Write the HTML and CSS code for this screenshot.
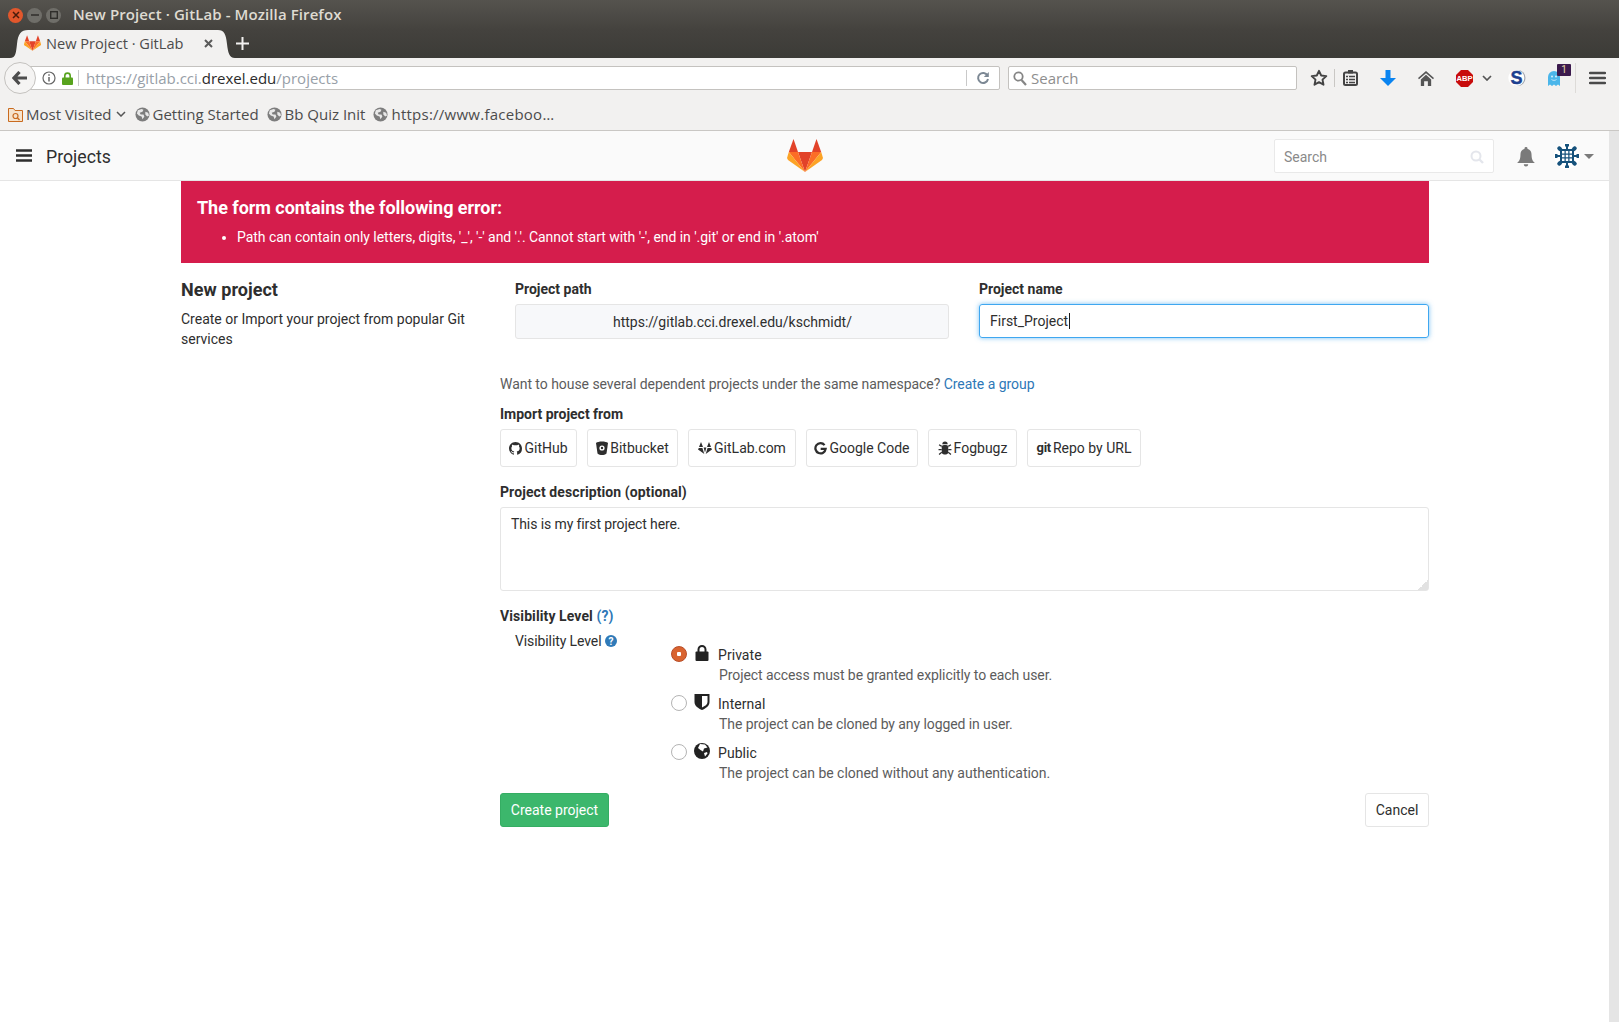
FILE: index.html
```html
<!DOCTYPE html>
<html lang="en">
    <head>
        <meta charset="UTF-8" />
        <title>New Project · GitLab</title>
        <link rel="stylesheet" href="styles.css">
    </head>
    <body>
        <svg class="sprites" width="0" height="0">
            <symbol id="fox" viewBox="0 0 36 33">
                <polygon fill="#e24329" points="11,13 25,13 18,33" />
                <polygon fill="#e24329" points="6.5,0 11,13 1.8,13" />
                <polygon fill="#e24329" points="29.5,0 34.2,13 25,13" />
                <polygon fill="#fc6d26" points="1.8,13 11,13 18,33" />
                <polygon fill="#fc6d26" points="25,13 34.2,13 18,33" />
                <polygon fill="#fca326" points="1.8,13 0,19 1,21 18,33" />
                <polygon fill="#fca326" points="34.2,13 36,19 35,21 18,33" />
            </symbol>
            <symbol id="globe" viewBox="0 0 16 16">
                <circle cx="8" cy="8" r="7.5" fill="#7d7d7d" />
                <path fill="#e8e8e8" d="M3 3.5 7 2l2 1-1 2-3 1 1 2 3 0 1 2-2 3-1-3-3-1-2-2zM11 5l3 1 1 3-2 1-2-2z" />
            </symbol>
        </svg>

        <div class="titlebar">
            <span class="wm-btn wm-close">
                <svg width="8" height="8" viewBox="0 0 8 8"><path d="M1 1l6 6M7 1L1 7" stroke="#4a1c0c" stroke-width="1.5" /></svg>
            </span>
            <span class="wm-btn wm-min">
                <svg width="8" height="8" viewBox="0 0 8 8"><path d="M0 4h8" stroke="#2f2e2b" stroke-width="1.5" /></svg>
            </span>
            <span class="wm-btn wm-max">
                <svg width="8" height="8" viewBox="0 0 8 8"><rect x="0.7" y="0.7" width="6.6" height="6.6" fill="none" stroke="#2f2e2b" stroke-width="1.4" /></svg>
            </span>
            <span class="win-title">New Project · GitLab - Mozilla Firefox</span>
        </div>

        <div class="tabstrip">
            <div class="tab">
                <svg class="tab-fav" width="17" height="16"><use href="#fox" /></svg>
                <span class="tab-label">New Project · GitLab</span>
                <svg class="tab-close" width="9" height="9" viewBox="0 0 9 9"><path d="M1 1l7 7M8 1L1 8" stroke="#5a5a5a" stroke-width="2" /></svg>
            </div>
            <svg class="new-tab" width="13" height="13" viewBox="0 0 13 13"><path d="M6.5 0v13M0 6.5h13" stroke="#f2f1f0" stroke-width="2" /></svg>
        </div>

        <div class="toolbar">
            <button class="back-btn">
                <svg width="16" height="14" viewBox="0 0 16 14"><path d="M7.5 1 2 7l5.500 6M2.500 7H15" fill="none" stroke="#4d4d4d" stroke-width="3.200" /></svg>
            </button>
            <div class="urlbar">
                <svg class="url-info" width="14" height="14" viewBox="0 0 14 14">
                    <circle cx="7" cy="7" r="6" fill="none" stroke="#666" stroke-width="1.2" />
                    <path d="M7 6v4.500M7 3.200v1.600" stroke="#666" stroke-width="1.500" />
                </svg>
                <svg class="url-lock" width="11" height="13" viewBox="0 0 11 13">
                    <path d="M2.800 6V3.800a2.700 2.700 0 0 1 5.400 0V6" fill="none" stroke="#58a31e" stroke-width="1.600" />
                    <rect y="5.500" width="11" height="7.500" rx="1" fill="#58a31e" />
                </svg>
                <span class="url-sep"></span>
                <span class="url-text">https://gitlab.cci.<b>drexel.edu</b>/projects</span>
                <span class="url-sep url-sep-end"></span>
                <svg class="url-reload" width="14" height="14" viewBox="0 0 14 14">
                    <path d="M11.500 4.500A5 5 0 1 0 12 8" fill="none" stroke="#7c8894" stroke-width="2" />
                    <path d="M12.800 1v5h-5z" fill="#7c8894" />
                </svg>
            </div>
            <div class="searchbar">
                <svg width="14" height="15" viewBox="0 0 14 15">
                    <circle cx="5.500" cy="5.500" r="4.200" fill="none" stroke="#858585" stroke-width="1.800" />
                    <path d="M8.500 9l4.500 5" stroke="#858585" stroke-width="2.200" />
                </svg>
                <span>Search</span>
            </div>

            <span class="tb-btn tb-star">
                <svg width="18" height="18" viewBox="0 0 18 18"><path d="M9 1.800l2.200 4.700 5.100.6-3.800 3.500 1 5.100L9 13.200l-4.500 2.500 1-5.100L1.700 7.100l5.100-.6z" fill="none" stroke="#444" stroke-width="1.900" stroke-linejoin="round" /></svg>
            </span>
            <span class="tb-sep tb-sep-a"></span>
            <span class="tb-btn tb-clip">
                <svg width="15" height="16" viewBox="0 0 15 16">
                    <rect x="1" y="2.500" width="13" height="12.500" rx="1.500" fill="#f2f1f0" stroke="#444" stroke-width="2" />
                    <rect x="5" y="0" width="5" height="3.500" fill="#444" />
                    <path d="M3 6.500h9M3 9.500h9M3 12.500h9" stroke="#444" stroke-width="1.500" />
                    <path d="M5.500 5.500v8.500" stroke="#f2f1f0" stroke-width="1" />
                </svg>
            </span>
            <span class="tb-btn">
                <svg width="16" height="16" viewBox="0 0 16 16"><path d="M5.500 0h5v8H16l-8 8-8-8h5.500z" fill="#0a84f0" /></svg>
            </span>
            <span class="tb-btn">
                <svg width="16" height="15" viewBox="0 0 17 16">
                    <path d="M8.500 0 17 7.500l-1 1.300-7.500-6.500L1 8.800 0 7.500z" fill="#555" />
                    <path d="M8.500 4 14 9v7h-3.500v-5h-4v5H3V9z" fill="#555" />
                </svg>
            </span>
            <span class="tb-btn">
                <svg width="17" height="17" viewBox="0 0 17 17">
                    <polygon points="5,0 12,0 17,5 17,12 12,17 5,17 0,12 0,5" fill="#c80c0c" />
                    <text class="abp-text" x="8.500" y="11.200">ABP</text>
                </svg>
            </span>
            <span class="tb-chevron">
                <svg width="10" height="6" viewBox="0 0 10 6"><path d="M1 1l4 4 4-4" fill="none" stroke="#555" stroke-width="1.700" /></svg>
            </span>
            <span class="tb-btn tb-s">
                <svg width="18" height="18" viewBox="0 0 18 18">
                    <circle cx="9.500" cy="9" r="8" fill="#a4a7b0" />
                    <circle cx="8.300" cy="9" r="8" fill="#fff" />
                    <text class="s-text" x="8.500" y="15">S</text>
                </svg>
            </span>
            <span class="tb-btn tb-ghost">
                <svg width="14" height="16" viewBox="0 0 14 16">
                    <path d="M1 7a6 6 0 0 1 12 0v9l-2-1.500L9 16l-2-1.500L5 16l-2-1.500L1 16z" fill="#4bb6ea" />
                    <circle cx="5" cy="6.500" r="1" fill="#d8f0fb" />
                    <circle cx="9" cy="6.500" r="1" fill="#d8f0fb" />
                    <path d="M4.500 9.500c1.500 1.200 3.500 1.200 5 0" fill="none" stroke="#d8f0fb" stroke-width="0.800" />
                </svg>
                <span class="tb-badge">1</span>
            </span>
            <span class="tb-sep tb-sep-b"></span>
            <span class="tb-btn tb-menu">
                <svg width="17" height="14" viewBox="0 0 17 14"><path d="M1 2h15M1 7h15M1 12h15" stroke="#4a4a4a" stroke-width="2.400" stroke-linecap="round" /></svg>
            </span>
        </div>

        <div class="bookmarks">
            <span class="bm bm-folder">
                <svg width="15" height="15" viewBox="0 0 15 15">
                    <path d="M0.500 14.500V1.500h5l1.500 2h7.500v11z" fill="#f6e3cc" stroke="#c96a1e" />
                    <circle cx="7.500" cy="9" r="2.500" fill="none" stroke="#c96a1e" stroke-width="1.200" />
                    <path d="M9.500 11l2 2" stroke="#c96a1e" stroke-width="1.400" />
                </svg>
                Most Visited
                <svg class="bm-chevron" width="10" height="6" viewBox="0 0 10 6"><path d="M1 1l4 4 4-4" fill="none" stroke="#555" stroke-width="1.500" /></svg>
            </span>
            <span class="bm"><svg width="15" height="15"><use href="#globe" /></svg>Getting Started</span>
            <span class="bm"><svg width="15" height="15"><use href="#globe" /></svg>Bb Quiz Init</span>
            <span class="bm bm-long"><svg width="15" height="15"><use href="#globe" /></svg>https://www.faceboo…</span>
        </div>

        <div class="viewport">
            <div class="page">
                <header class="nav">
                    <div class="nav-left">
                        <svg width="16" height="13" viewBox="0 0 16 13"><path d="M0 1.500h16M0 6.500h16M0 11.500h16" stroke="#2e2e2e" stroke-width="2.600" /></svg>
                        <span class="nav-title">Projects</span>
                    </div>
                    <svg class="nav-logo" width="36" height="33"><use href="#fox" /></svg>
                    <div class="nav-right">
                        <div class="nav-search">
                            <span>Search</span>
                            <svg width="14" height="14" viewBox="0 0 14 14">
                                <circle cx="6" cy="6" r="4.500" fill="none" stroke="#e4e6ec" stroke-width="2" />
                                <path d="M9.500 9.500 13 13" stroke="#e4e6ec" stroke-width="2.400" />
                            </svg>
                        </div>
                        <svg class="nav-bell" width="18" height="20" viewBox="0 0 16 18">
                            <path d="M8 0a1.300 1.300 0 0 1 1.300 1.500C12 2.200 13 4.500 13 7c0 4 1 5.500 3 7.500H0C2 12.500 3 11 3 7c0-2.500 1-4.800 3.700-5.500A1.300 1.300 0 0 1 8 0z" fill="#7a7a7a" />
                            <path d="M6 15.500h4a2 2 0 0 1-4 0z" fill="#7a7a7a" />
                        </svg>
                        <svg class="nav-avatar" width="26" height="26" viewBox="0 0 26 26">
                            <circle cx="13" cy="13" r="13" fill="#fff" />
                            <path d="M6 6h14v14H6z" fill="#16527c" />
                            <path d="M8 8h2.500v2.500H8zM11.750 8h2.500v2.500h-2.500zM15.500 8H18v2.500h-2.500zM8 11.750h2.500v2.500H8zM11.750 11.750h2.500v2.500h-2.500zM15.500 11.750H18v2.500h-2.500zM8 15.500h2.500V18H8zM11.750 15.500h2.500V18h-2.500zM15.500 15.500H18V18h-2.500z" fill="#fff" />
                            <path d="M11 1h4v2l-1 1v2h-2V4l-1-1zM11 25h4v-2l-1-1v-2h-2v2l-1 1zM1 11v4h2l1-1h2v-2H4l-1-1zM25 11v4h-2l-1-1h-2v-2h2l1-1zM3 5l2-2 2 1 2 3-2 2-3-2zM23 5l-2-2-2 1-2 3 2 2 3-2zM3 21l2 2 2-1 2-3-2-2-3 2zM23 21l-2 2-2-1-2-3 2-2 3 2z" fill="#16527c" />
                        </svg>
                        <span class="caret"></span>
                    </div>
                </header>

                <main class="content">
                    <div class="alert">
                        <h4>The form contains the following error:</h4>
                        <ul>
                            <li>Path can contain only letters, digits, '_', '-' and '.'. Cannot start with '-', end in '.git' or end in '.atom'</li>
                        </ul>
                    </div>

                    <div class="layout">
                        <aside class="intro">
                            <h4>New project</h4>
                            <p>Create or Import your project from popular Git services</p>
                        </aside>

                        <form class="project-form">
                            <div class="path-row">
                                <div class="path-col">
                                    <label>Project path</label>
                                    <div class="input-static">https://gitlab.cci.drexel.edu/kschmidt/</div>
                                </div>
                                <div class="name-col">
                                    <label>Project name</label>
                                    <div class="input-focus"><span class="typed">First_Project</span></div>
                                </div>
                            </div>

                            <p class="hint">Want to house several dependent projects under the same namespace? <a href="#">Create a group</a></p>

                            <label class="label-import">Import project from</label>
                            <div class="import-list">
                                <a class="btn btn-github" href="#">
                                    <svg width="13" height="13" viewBox="0 0 16 16"><path fill="#2e2e2e" d="M8 0C3.580 0 0 3.580 0 8c0 3.540 2.290 6.530 5.470 7.590.4.070.55-.17.55-.38 0-.19-.01-.82-.01-1.490-2.010.37-2.530-.49-2.690-.94-.09-.23-.48-.94-.82-1.130-.28-.15-.68-.52-.01-.53.63-.01 1.080.58 1.230.82.72 1.210 1.870.87 2.330.66.07-.52.28-.87.51-1.070-1.780-.2-3.640-.89-3.640-3.950 0-.87.31-1.590.82-2.150-.08-.2-.36-1.020.08-2.120 0 0 .67-.21 2.200.82.64-.18 1.320-.27 2-.27.68 0 1.360.09 2 .27 1.530-1.040 2.200-.82 2.200-.82.44 1.100.16 1.920.08 2.120.51.56.82 1.270.82 2.150 0 3.070-1.870 3.750-3.650 3.950.29.25.54.73.54 1.480 0 1.070-.01 1.930-.01 2.200 0 .21.15.46.55.38A8.013 8.013 0 0 0 16 8c0-4.420-3.580-8-8-8z" /></svg>
                                    GitHub
                                </a>
                                <a class="btn btn-bitbucket" href="#">
                                    <svg width="12" height="14" viewBox="0 0 12 14">
                                        <path d="M0 2C2 0 10 0 12 2l-1.500 10.500c-2.500 2-6.500 2-9 0z" fill="#2e2e2e" />
                                        <circle cx="6" cy="7" r="2.600" fill="#fff" />
                                        <circle cx="6" cy="7" r="1.200" fill="#2e2e2e" />
                                    </svg>
                                    Bitbucket
                                </a>
                                <a class="btn btn-gitlab" href="#">
                                    <svg width="14" height="13" viewBox="0 0 14 13">
                                        <path fill="#2e2e2e" d="M3 0 5 5H1zM11 0l2 5H9zM5.600 5.600h2.800L7 10.500zM0.800 6H4.400L6.300 12 0 7.600zM13.200 6H9.600L7.700 12 14 7.600z" />
                                    </svg>
                                    GitLab.com
                                </a>
                                <a class="btn btn-google" href="#">
                                    <svg width="13" height="13" viewBox="0 0 16 16"><path d="M13 3.800A6.300 6.300 0 1 0 14.300 8.500H8.200" fill="none" stroke="#2e2e2e" stroke-width="2.800" /></svg>
                                    Google Code
                                </a>
                                <a class="btn btn-fogbugz" href="#">
                                    <svg width="14" height="14" viewBox="0 0 13 13">
                                        <path d="M4 3a2.500 2.500 0 0 1 5 0z" fill="#2e2e2e" />
                                        <rect x="3.500" y="3.800" width="6" height="8.700" rx="2" fill="#2e2e2e" />
                                        <path d="M3.500 5 1 3.500M9.500 5 12 3.500M3.500 8H0.500M9.500 8h3M3.500 10.500 1 12.500M9.500 10.500l2.500 2" stroke="#2e2e2e" stroke-width="1.200" />
                                    </svg>
                                    Fogbugz
                                </a>
                                <a class="btn btn-git" href="#"><b class="git-mark">git</b> Repo by URL</a>
                            </div>

                            <label class="label-desc">Project description (optional)</label>
                            <textarea class="desc-input">This is my first project here.</textarea>

                            <label class="label-vis">Visibility Level <a href="#">(?)</a></label>
                            <div class="vis-row">
                                <div class="vis-side">
                                    Visibility Level
                                    <svg width="12" height="12" viewBox="0 0 12 12">
                                        <circle cx="6" cy="6" r="6" fill="#2f7ab8" />
                                        <text class="help-text" x="6" y="9.500">?</text>
                                    </svg>
                                </div>
                                <div class="vis-options">
                                    <div class="vis-option">
                                        <input type="radio" name="vis" class="radio" checked />
                                        <svg class="vis-icon" width="20" height="16" viewBox="0 0 20 16">
                                            <path d="M6.500 7V4.500a3.500 3.500 0 0 1 7 0V7" fill="none" stroke="#222" stroke-width="2" />
                                            <rect x="3.500" y="6.500" width="13" height="9.500" rx="1" fill="#222" />
                                        </svg>
                                        <div class="vis-text">
                                            <div class="vis-name">Private</div>
                                            <div class="vis-note">Project access must be granted explicitly to each user.</div>
                                        </div>
                                    </div>
                                    <div class="vis-option">
                                        <input type="radio" name="vis" class="radio" />
                                        <svg class="vis-icon" width="20" height="16" viewBox="0 0 20 16">
                                            <path d="M2.500 0h15v8c0 4-4 6.500-7.500 8-3.500-1.500-7.500-4-7.500-8z" fill="#222" />
                                            <path d="M10 2h5.500v6c0 2.500-2.500 4-5.500 5.500z" fill="#fff" />
                                        </svg>
                                        <div class="vis-text">
                                            <div class="vis-name">Internal</div>
                                            <div class="vis-note">The project can be cloned by any logged in user.</div>
                                        </div>
                                    </div>
                                    <div class="vis-option">
                                        <input type="radio" name="vis" class="radio" />
                                        <svg class="vis-icon" width="20" height="16" viewBox="0 0 20 16">
                                            <circle cx="10" cy="8" r="8" fill="#222" />
                                            <path d="M8 1l5 .500 2.500 3-3.500 1-1 3-2.500-1.500L6 5zM12 10l3-1 .500 1.500-2.500 3z" fill="#fff" />
                                        </svg>
                                        <div class="vis-text">
                                            <div class="vis-name">Public</div>
                                            <div class="vis-note">The project can be cloned without any authentication.</div>
                                        </div>
                                    </div>
                                </div>
                            </div>

                            <div class="form-actions">
                                <button type="button" class="btn-create">Create project</button>
                                <button type="button" class="btn-cancel">Cancel</button>
                            </div>
                        </form>
                    </div>
                </main>
            </div>
            <div class="scrollbar"></div>
        </div>
    </body>
</html>
```

FILE: styles.css
```css
html,
body {
    margin: 0;
    padding: 0;
    height: 1022px;
    overflow: hidden;
}
body {
    font-family: Roboto, Arial, sans-serif;
    font-size: 14px;
    color: #2e2e2e;
    background-color: #ffffff;
}
.sprites {
    display: block;
    height: 0;
}

/* browser window */
.titlebar {
    height: 30px;
    display: flex;
    align-items: center;
    padding-left: 8px;
    box-sizing: border-box;
    background: linear-gradient(#55534e, #44423e);
}
.wm-btn {
    width: 15px;
    height: 15px;
    margin-right: 4px;
    border-radius: 50%;
    display: flex;
    align-items: center;
    justify-content: center;
    background-color: #6f6e69;
}
.wm-close {
    background-color: #e2572c;
}
.win-title {
    margin: -2px 0 0 8px;
    font-family: "Open Sans", sans-serif;
    font-size: 15px;
    font-weight: 600;
    letter-spacing: 0.1px;
    color: #dfdbd2;
}
.tabstrip {
    height: 28px;
    display: flex;
    align-items: flex-end;
    padding-left: 10px;
    background: linear-gradient(#44423e, #3c3b37);
}
.tab {
    width: 225px;
    height: 28px;
    display: flex;
    align-items: center;
    box-sizing: border-box;
    padding: 0 0 2px 14px;
    background-color: #f2f1f0;
    clip-path: path("M0 28C6 28 6 22 7 14C8 4 11 0 18 0H208C214 0 216 4 217 14C218 22 219 28 225 28Z");
}
.tab-label {
    margin-left: 5px;
    font-family: "Open Sans", sans-serif;
    font-size: 14.6px;
    color: #4c4c4c;
}
.tab-close {
    margin-left: 21px;
}
.new-tab {
    margin: 0 0 8px 1px;
}
.toolbar {
    height: 40px;
    display: flex;
    align-items: center;
    padding-left: 4px;
    box-sizing: border-box;
    background-color: #f2f1f0;
}
.back-btn {
    width: 32px;
    height: 32px;
    margin-top: -1px;
    padding: 0;
    display: flex;
    align-items: center;
    justify-content: center;
    position: relative;
    z-index: 1;
    border: 1px solid #c4c2bf;
    border-radius: 50%;
    background-color: #f5f4f3;
}
.urlbar,
.searchbar {
    height: 24px;
    display: flex;
    align-items: center;
    box-sizing: border-box;
    border: 1px solid #c4c2bf;
    border-radius: 2px;
    background-color: #ffffff;
    font-family: "Open Sans", sans-serif;
    font-size: 15px;
    color: #8e8e8e;
}
.urlbar {
    width: 980px;
    margin-left: -16px;
    padding-left: 21px;
}
.url-lock {
    margin-left: 6px;
}
.url-sep {
    width: 1px;
    height: 16px;
    margin-left: 5px;
    background-color: #c9c9c9;
}
.url-text {
    flex: 1;
    margin-left: 7px;
    color: #98a0a8;
}
.url-text b {
    font-weight: 400;
    color: #2b2b2b;
}
.url-reload {
    margin: 0 9px 0 9px;
}
.searchbar {
    width: 289px;
    margin-left: 8px;
    padding-left: 4px;
}
.searchbar span {
    margin-left: 4px;
}
.tb-btn {
    width: 24px;
    height: 24px;
    margin-left: 14px;
    position: relative;
    display: flex;
    align-items: center;
    justify-content: center;
}
.tb-star {
    margin-left: 10px;
}
.tb-clip {
    margin-left: 3px;
}
.tb-sep {
    width: 1px;
}
.tb-sep-a {
    height: 18px;
    margin-left: 3px;
    background-color: #c9c7c4;
}
.tb-sep-b {
    height: 30px;
    margin-left: 9px;
    background-color: #dddbd8;
}
.tb-chevron {
    width: 12px;
    margin-left: 5px;
    display: flex;
    justify-content: center;
}
.tb-s {
    margin-left: 12px;
}
.tb-ghost {
    margin-left: 13px;
}
.tb-menu {
    margin-left: 9px;
}
.tb-badge {
    position: absolute;
    top: -2px;
    left: 15px;
    width: 14px;
    height: 12px;
    border-radius: 1px;
    background-color: #3b1a4d;
    color: #e6dba8;
    font-size: 10px;
    line-height: 12px;
    text-align: center;
}
.abp-text {
    font-family: "Liberation Sans", sans-serif;
    font-size: 7.6px;
    font-weight: 700;
    fill: #ffffff;
    text-anchor: middle;
}
.s-text {
    font-family: "Liberation Sans", sans-serif;
    font-size: 18px;
    font-weight: 700;
    fill: #1d3f8f;
    stroke: #1d3f8f;
    stroke-width: 0.4px;
    text-anchor: middle;
}
.bookmarks {
    height: 33px;
    display: flex;
    align-items: center;
    gap: 8px;
    padding-left: 8px;
    box-sizing: border-box;
    border-bottom: 1px solid #c9c7c4;
    background-color: #f2f1f0;
    font-family: "Open Sans", sans-serif;
    font-size: 15px;
    color: #4c4c4c;
}
.bm {
    display: flex;
    align-items: center;
    gap: 3px;
}
.bm-chevron {
    margin-left: 1px;
}
.bm-folder {
    margin-right: 1px;
}
.bm-long {
    letter-spacing: 0.25px;
}

/* page */
.viewport {
    display: flex;
    height: 891px;
}
.page {
    flex: 1;
    min-width: 0;
}
.scrollbar {
    width: 10px;
    background-color: #e5e5e5;
}
.nav {
    height: 50px;
    display: grid;
    grid-template-columns: 1fr auto 1fr;
    align-items: center;
    box-sizing: border-box;
    border-bottom: 1px solid #e5e5e5;
    background-color: #fafafa;
}
.nav-left {
    display: flex;
    align-items: center;
    padding-left: 16px;
}
.nav-title {
    margin: 2px 0 0 14px;
    font-size: 17.7px;
    color: #2e2e2e;
}
.nav-logo {
    display: block;
}
.nav-right {
    display: flex;
    align-items: center;
    justify-content: flex-end;
}
.nav-search {
    width: 220px;
    height: 34px;
    display: flex;
    align-items: center;
    justify-content: space-between;
    padding: 2px 9px 0;
    box-sizing: border-box;
    border: 1px solid #e9e9e9;
    border-radius: 2px;
    background-color: #ffffff;
    color: #8a8a8a;
}
.nav-bell {
    margin: 2px 0 0 23px;
}
.nav-avatar {
    margin-left: 19px;
}
.caret {
    width: 0;
    height: 0;
    margin: 2px 15px 0 4px;
    border-left: 5px solid transparent;
    border-right: 5px solid transparent;
    border-top: 5px solid #7a7a7a;
}
.content {
    width: 1248px;
    margin-left: 181px;
}
.alert {
    height: 82px;
    padding: 16px;
    box-sizing: border-box;
    background-color: #d51d4c;
    color: #ffffff;
}
.alert h4 {
    margin: 0 0 8px;
    font-size: 18px;
    font-weight: 700;
    line-height: 22px;
    letter-spacing: -0.04px;
}
.alert ul {
    margin: 0;
    padding-left: 40px;
    line-height: 20px;
    letter-spacing: -0.045px;
}
.layout {
    display: flex;
}
.intro {
    width: 319px;
    padding: 16px 15px 0 0;
    box-sizing: border-box;
}
.intro h4 {
    margin: 0 0 8px;
    font-size: 18px;
    font-weight: 700;
    line-height: 22px;
    letter-spacing: 0.03px;
}
.intro p {
    margin: 0;
    line-height: 20px;
}
.project-form {
    flex: 1;
    padding-top: 16px;
}
label {
    display: block;
    font-weight: 700;
    line-height: 20px;
}
.path-row {
    display: flex;
    padding-left: 15px;
}
.path-col {
    width: 434px;
}
.name-col {
    flex: 1;
    margin-left: 30px;
}
.input-static,
.input-focus {
    margin-top: 5px;
    box-sizing: border-box;
    border-radius: 3px;
}
.input-static {
    height: 35px;
    padding-left: 97px;
    border: 1px solid #e5e5e5;
    background-color: #f7f8fa;
    line-height: 35px;
}
.input-focus {
    height: 34px;
    padding-left: 10px;
    border: 1px solid #3fa7f0;
    box-shadow: 0 0 5px rgba(63, 167, 240, 0.7);
    line-height: 32px;
}
.typed {
    padding-right: 1px;
    border-right: 1px solid #1a1a1a;
}
.hint {
    margin: 35px 0 0;
    line-height: 20px;
    letter-spacing: -0.045px;
    color: #5c5c5c;
}
.hint a,
.label-vis a {
    color: #2e78b7;
    text-decoration: none;
}
.label-import {
    margin-top: 10px;
}
.import-list {
    display: flex;
    gap: 10px;
    margin-top: 5px;
}
.btn {
    height: 38px;
    display: flex;
    align-items: center;
    justify-content: center;
    gap: 2px;
    box-sizing: border-box;
    border: 1px solid #e5e5e5;
    border-radius: 3px;
    background-color: #ffffff;
    color: #2e2e2e;
    text-decoration: none;
}
.btn-github {
    width: 77px;
}
.btn-bitbucket {
    width: 91px;
}
.btn-gitlab {
    width: 108px;
}
.btn-google {
    width: 112px;
}
.btn-fogbugz {
    width: 89px;
}
.btn-git {
    width: 114px;
}
.git-mark {
    margin-top: -2px;
    font-size: 13px;
    font-weight: 700;
    letter-spacing: -0.3px;
}
.label-desc {
    margin-top: 15px;
    letter-spacing: 0.1px;
}
.desc-input {
    display: block;
    width: 100%;
    height: 84px;
    margin-top: 5px;
    padding: 6px 10px;
    box-sizing: border-box;
    border: 1px solid #e5e5e5;
    border-radius: 3px;
    outline: none;
    resize: none;
    background: linear-gradient(135deg, transparent 50%, #e2e2e2 50%) no-repeat right bottom / 10px 10px #ffffff;
    font-family: Roboto, Arial, sans-serif;
    font-size: 14px;
    line-height: 20px;
    letter-spacing: -0.1px;
    color: #2e2e2e;
}
.label-vis {
    margin-top: 15px;
    letter-spacing: 0.1px;
}
.vis-row {
    display: flex;
    margin-top: 5px;
}
.vis-side {
    width: 170px;
    padding-left: 15px;
    box-sizing: border-box;
    line-height: 20px;
    letter-spacing: -0.1px;
}
.vis-side svg {
    vertical-align: -1px;
}
.help-text {
    font-family: Roboto, sans-serif;
    font-size: 10px;
    font-weight: 700;
    fill: #ffffff;
    text-anchor: middle;
}
.vis-options {
    padding-top: 13px;
}
.vis-option {
    display: flex;
    align-items: flex-start;
    margin-bottom: 8px;
}
.vis-option:last-child {
    margin-bottom: 0;
}
.radio {
    appearance: none;
    width: 16px;
    height: 16px;
    margin: 2px 0 0 1px;
    box-sizing: border-box;
    border: 1px solid #b4b4b4;
    border-radius: 50%;
    background-color: #ffffff;
}
.radio:checked {
    border-color: #b84c26;
    background: radial-gradient(circle, #ffffff 0 2px, #d9632f 2.5px);
}
.vis-icon {
    margin: 1px 0 0 5px;
    flex-shrink: 0;
}
.vis-text {
    margin: 1px 0 0 6px;
}
.vis-name {
    line-height: 20px;
    letter-spacing: 0.05px;
}
.vis-note {
    margin-left: 1px;
    line-height: 20px;
    letter-spacing: -0.08px;
    color: #5c5c5c;
}
.vis-option:last-child .vis-note {
    letter-spacing: -0.02px;
}
.form-actions {
    display: flex;
    justify-content: space-between;
    margin-top: 10px;
}
.btn-create,
.btn-cancel {
    height: 34px;
    padding: 0;
    border-radius: 3px;
    font-family: Roboto, Arial, sans-serif;
    font-size: 14px;
}
.btn-create {
    width: 109px;
    border: 1px solid #35ad63;
    background-color: #3cb76c;
    color: #ffffff;
}
.btn-cancel {
    width: 64px;
    border: 1px solid #e5e5e5;
    background-color: #ffffff;
    color: #2e2e2e;
}
```
